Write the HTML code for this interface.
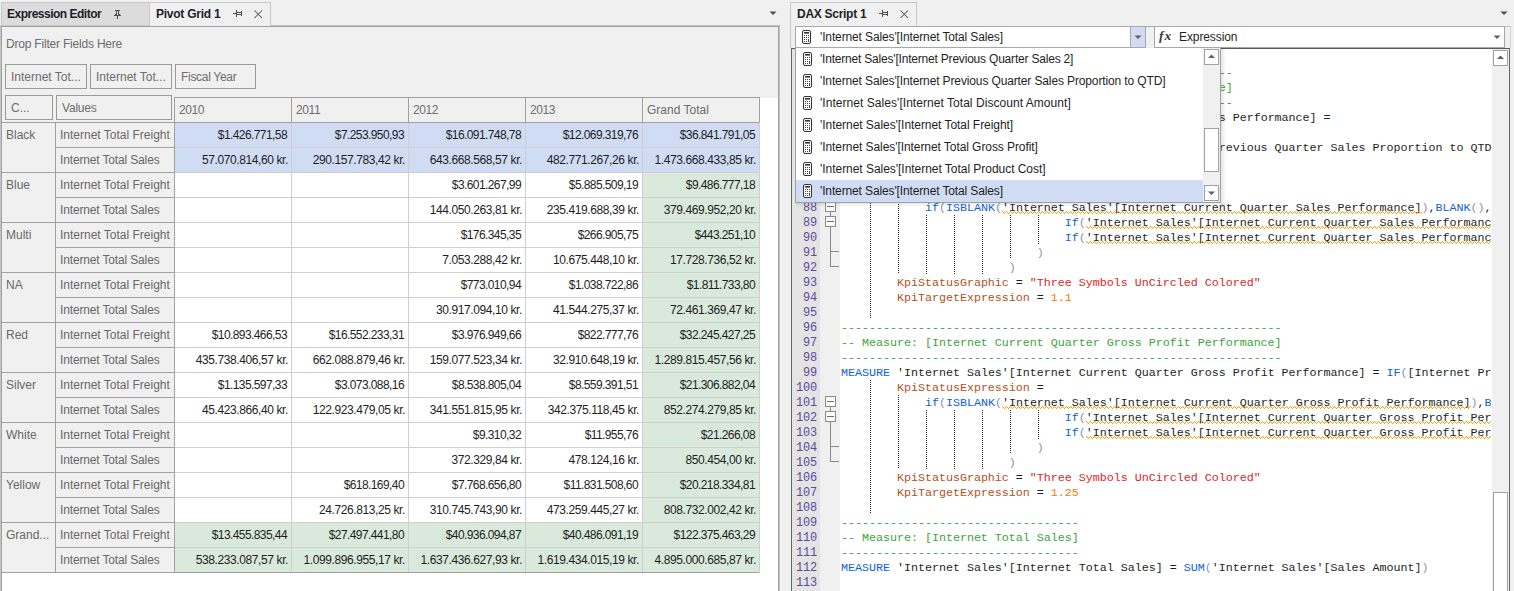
<!DOCTYPE html><html><head><meta charset="utf-8"><style>
*{margin:0;padding:0;box-sizing:border-box}
html,body{width:1514px;height:591px;overflow:hidden;background:#f0f0f0;position:relative;font-family:"Liberation Sans",sans-serif;}
div{white-space:pre}
.ui{font-size:12px;line-height:14px;color:#6d6d6d}
.tab{font-size:12px;font-weight:bold;line-height:14px;color:#1e1e2a}
.num{font-size:12px;line-height:14px;color:#1e1e1e;letter-spacing:-0.55px;text-align:right}
.rh{font-size:12px;line-height:14px;color:#686868}
.code{font-family:"Liberation Mono",monospace;font-size:11.7px;letter-spacing:-0.02px;line-height:15px;color:#1e1e1e}
.ln{font-family:"Liberation Mono",monospace;font-size:11.9px;letter-spacing:-0.14px;line-height:15px;color:#5c4a9c;text-align:right}
.kw{color:#0f62d8}.cm{color:#3ca33c}.pr{color:#b0521a}.st{color:#e02525}.nu{color:#f07c00}.pa{color:#8a90b0}
.sqx{text-decoration:underline wavy #f5a623;text-decoration-thickness:1px;text-underline-offset:2px}
</style></head><body>
<div style="position:absolute;left:1px;top:2px;width:148px;height:24px;background:#dcdcdc;border-top:1px solid #c8c8c8;border-left:1px solid #c8c8c8"></div>
<div style="position:absolute;left:149px;top:2px;width:1px;height:24px;background:#c8c8c8"></div>
<div class="tab" style="position:absolute;left:7px;top:7px;letter-spacing:-0.5px">Expression Editor</div>
<svg style="position:absolute;left:112px;top:8px" width="12" height="13" shape-rendering="crispEdges"><g fill="#505050"><rect x="3" y="2" width="5" height="1"/><rect x="4" y="3" width="1" height="4"/><rect x="6" y="3" width="1" height="4"/><rect x="3" y="6" width="1" height="1"/><rect x="7" y="6" width="1" height="1"/><rect x="2" y="7" width="7" height="1"/><rect x="5" y="8" width="1" height="3"/></g></svg>
<div style="position:absolute;left:150px;top:2px;width:121px;height:24px;background:#f0f0f0;border-top:1px solid #c8c8c8;border-right:1px solid #c8c8c8"></div>
<div class="tab" style="position:absolute;left:156px;top:7px;letter-spacing:-0.25px">Pivot Grid 1</div>
<svg style="position:absolute;left:232px;top:9px" width="12" height="10" shape-rendering="crispEdges"><g fill="#505050"><rect x="1" y="4" width="3" height="1"/><rect x="4" y="1" width="1" height="7"/><rect x="5" y="3" width="4" height="1"/><rect x="5" y="5" width="4" height="1"/><rect x="9" y="2" width="1" height="5"/></g></svg>
<svg style="position:absolute;left:254px;top:10px" width="9" height="9" viewBox="0 0 9 9"><path d="M0.5 0.5L8 8M8 0.5L0.5 8" stroke="#555" stroke-width="1.05"/></svg>
<svg style="position:absolute;left:769px;top:11px" width="8" height="5" viewBox="0 0 8 5"><path d="M0.5 0.5h7L4 4z" fill="#505050"/></svg>
<div style="position:absolute;left:1px;top:26px;width:778px;height:565px;background:#f0f0f0;border-top:1px solid #a0a0a0;border-left:1px solid #a0a0a0;border-right:1px solid #a0a0a0"></div>
<div style="position:absolute;left:271px;top:25px;width:509px;height:1px;background:#c4c4c4"></div>
<div style="position:absolute;left:779px;top:25px;width:1px;height:566px;background:#c4c4c4"></div>
<div style="position:absolute;left:0px;top:25px;width:1px;height:566px;background:#c4c4c4"></div>
<div style="position:absolute;left:1px;top:25px;width:148px;height:1px;background:#c8c8c8"></div>
<div style="position:absolute;left:2px;top:98px;width:776px;height:493px;background:#fff"></div>
<div style="position:absolute;left:2px;top:98px;width:173px;height:25px;background:#f0f0f0"></div>
<div class="ui" style="position:absolute;left:6px;top:37px;letter-spacing:-0.2px">Drop Filter Fields Here</div>
<div style="position:absolute;left:5px;top:64px;width:82px;height:25px;border:1px solid #9a9a9a"></div>
<div class="ui" style="position:absolute;left:11px;top:70px;">Internet Tot...</div>
<div style="position:absolute;left:90px;top:64px;width:82px;height:25px;border:1px solid #9a9a9a"></div>
<div class="ui" style="position:absolute;left:96px;top:70px;">Internet Tot...</div>
<div style="position:absolute;left:175px;top:64px;width:81px;height:25px;border:1px solid #9a9a9a"></div>
<div class="ui" style="position:absolute;left:181px;top:70px;letter-spacing:-0.3px">Fiscal Year</div>
<div style="position:absolute;left:5px;top:95px;width:48px;height:25px;border:1px solid #9a9a9a"></div>
<div class="ui" style="position:absolute;left:11px;top:101px;">C...</div>
<div style="position:absolute;left:56px;top:95px;width:116px;height:25px;border:1px solid #9a9a9a"></div>
<div class="ui" style="position:absolute;left:62px;top:101px;letter-spacing:-0.2px">Values</div>
<div style="position:absolute;left:174px;top:97px;width:586px;height:26px;background:#f0f0f0;border-top:1px solid #a0a0a0;border-left:1px solid #a0a0a0;border-right:1px solid #a0a0a0"></div>
<div class="ui" style="position:absolute;left:179px;top:103px;letter-spacing:-0.4px">2010</div>
<div style="position:absolute;left:291px;top:97px;width:1px;height:25px;background:#a0a0a0"></div>
<div class="ui" style="position:absolute;left:296px;top:103px;letter-spacing:-0.4px">2011</div>
<div style="position:absolute;left:408px;top:97px;width:1px;height:25px;background:#a0a0a0"></div>
<div class="ui" style="position:absolute;left:413px;top:103px;letter-spacing:-0.4px">2012</div>
<div style="position:absolute;left:525px;top:97px;width:1px;height:25px;background:#a0a0a0"></div>
<div class="ui" style="position:absolute;left:530px;top:103px;letter-spacing:-0.4px">2013</div>
<div style="position:absolute;left:642px;top:97px;width:1px;height:25px;background:#a0a0a0"></div>
<div class="ui" style="position:absolute;left:647px;top:103px;">Grand Total</div>
<div style="position:absolute;left:1px;top:122px;width:759px;height:1px;background:#a0a0a0"></div>
<div style="position:absolute;left:2px;top:123px;width:53px;height:50px;background:#f0f0f0;border-bottom:1px solid #a0a0a0"></div>
<div class="rh" style="position:absolute;left:6px;top:128px;">Black</div>
<div style="position:absolute;left:55px;top:123px;width:120px;height:25px;background:#f0f0f0;border-bottom:1px solid #a0a0a0;border-left:1px solid #a0a0a0;border-right:1px solid #a0a0a0"></div>
<div class="rh" style="position:absolute;left:60px;top:128px;">Internet Total Freight</div>
<div style="position:absolute;left:175px;top:123px;width:117px;height:25px;background:#cfdcf4;border-bottom:1px solid #cfcfcf;border-right:1px solid #cfcfcf"></div>
<div class="num" style="position:absolute;left:175px;top:128px;width:112px;letter-spacing:-0.58px">$1.426.771,58</div>
<div style="position:absolute;left:292px;top:123px;width:117px;height:25px;background:#cfdcf4;border-bottom:1px solid #cfcfcf;border-right:1px solid #cfcfcf"></div>
<div class="num" style="position:absolute;left:292px;top:128px;width:112px;letter-spacing:-0.58px">$7.253.950,93</div>
<div style="position:absolute;left:409px;top:123px;width:117px;height:25px;background:#cfdcf4;border-bottom:1px solid #cfcfcf;border-right:1px solid #cfcfcf"></div>
<div class="num" style="position:absolute;left:409px;top:128px;width:112px;letter-spacing:-0.58px">$16.091.748,78</div>
<div style="position:absolute;left:526px;top:123px;width:117px;height:25px;background:#cfdcf4;border-bottom:1px solid #cfcfcf;border-right:1px solid #cfcfcf"></div>
<div class="num" style="position:absolute;left:526px;top:128px;width:112px;letter-spacing:-0.58px">$12.069.319,76</div>
<div style="position:absolute;left:643px;top:123px;width:117px;height:25px;background:#cfdcf4;border-bottom:1px solid #cfcfcf;border-right:1px solid #cfcfcf"></div>
<div class="num" style="position:absolute;left:643px;top:128px;width:112px;letter-spacing:-0.58px">$36.841.791,05</div>
<div style="position:absolute;left:55px;top:148px;width:120px;height:25px;background:#f0f0f0;border-bottom:1px solid #a0a0a0;border-left:1px solid #a0a0a0;border-right:1px solid #a0a0a0"></div>
<div class="rh" style="position:absolute;left:60px;top:153px;letter-spacing:-0.15px">Internet Total Sales</div>
<div style="position:absolute;left:175px;top:148px;width:117px;height:25px;background:#cfdcf4;border-bottom:1px solid #cfcfcf;border-right:1px solid #cfcfcf"></div>
<div class="num" style="position:absolute;left:175px;top:153px;width:113px;letter-spacing:-0.4px">57.070.814,60 kr.</div>
<div style="position:absolute;left:292px;top:148px;width:117px;height:25px;background:#cfdcf4;border-bottom:1px solid #cfcfcf;border-right:1px solid #cfcfcf"></div>
<div class="num" style="position:absolute;left:292px;top:153px;width:113px;letter-spacing:-0.4px">290.157.783,42 kr.</div>
<div style="position:absolute;left:409px;top:148px;width:117px;height:25px;background:#cfdcf4;border-bottom:1px solid #cfcfcf;border-right:1px solid #cfcfcf"></div>
<div class="num" style="position:absolute;left:409px;top:153px;width:113px;letter-spacing:-0.4px">643.668.568,57 kr.</div>
<div style="position:absolute;left:526px;top:148px;width:117px;height:25px;background:#cfdcf4;border-bottom:1px solid #cfcfcf;border-right:1px solid #cfcfcf"></div>
<div class="num" style="position:absolute;left:526px;top:153px;width:113px;letter-spacing:-0.4px">482.771.267,26 kr.</div>
<div style="position:absolute;left:643px;top:148px;width:117px;height:25px;background:#cfdcf4;border-bottom:1px solid #cfcfcf;border-right:1px solid #cfcfcf"></div>
<div class="num" style="position:absolute;left:643px;top:153px;width:113px;letter-spacing:-0.4px">1.473.668.433,85 kr.</div>
<div style="position:absolute;left:2px;top:173px;width:53px;height:50px;background:#f0f0f0;border-bottom:1px solid #a0a0a0"></div>
<div class="rh" style="position:absolute;left:6px;top:178px;">Blue</div>
<div style="position:absolute;left:55px;top:173px;width:120px;height:25px;background:#f0f0f0;border-bottom:1px solid #a0a0a0;border-left:1px solid #a0a0a0;border-right:1px solid #a0a0a0"></div>
<div class="rh" style="position:absolute;left:60px;top:178px;">Internet Total Freight</div>
<div style="position:absolute;left:175px;top:173px;width:117px;height:25px;background:#fff;border-bottom:1px solid #cfcfcf;border-right:1px solid #cfcfcf"></div>
<div style="position:absolute;left:292px;top:173px;width:117px;height:25px;background:#fff;border-bottom:1px solid #cfcfcf;border-right:1px solid #cfcfcf"></div>
<div style="position:absolute;left:409px;top:173px;width:117px;height:25px;background:#fff;border-bottom:1px solid #cfcfcf;border-right:1px solid #cfcfcf"></div>
<div class="num" style="position:absolute;left:409px;top:178px;width:112px;letter-spacing:-0.58px">$3.601.267,99</div>
<div style="position:absolute;left:526px;top:173px;width:117px;height:25px;background:#fff;border-bottom:1px solid #cfcfcf;border-right:1px solid #cfcfcf"></div>
<div class="num" style="position:absolute;left:526px;top:178px;width:112px;letter-spacing:-0.58px">$5.885.509,19</div>
<div style="position:absolute;left:643px;top:173px;width:117px;height:25px;background:#d9e9dc;border-bottom:1px solid #cfcfcf;border-right:1px solid #cfcfcf"></div>
<div class="num" style="position:absolute;left:643px;top:178px;width:112px;letter-spacing:-0.58px">$9.486.777,18</div>
<div style="position:absolute;left:55px;top:198px;width:120px;height:25px;background:#f0f0f0;border-bottom:1px solid #a0a0a0;border-left:1px solid #a0a0a0;border-right:1px solid #a0a0a0"></div>
<div class="rh" style="position:absolute;left:60px;top:203px;letter-spacing:-0.15px">Internet Total Sales</div>
<div style="position:absolute;left:175px;top:198px;width:117px;height:25px;background:#fff;border-bottom:1px solid #cfcfcf;border-right:1px solid #cfcfcf"></div>
<div style="position:absolute;left:292px;top:198px;width:117px;height:25px;background:#fff;border-bottom:1px solid #cfcfcf;border-right:1px solid #cfcfcf"></div>
<div style="position:absolute;left:409px;top:198px;width:117px;height:25px;background:#fff;border-bottom:1px solid #cfcfcf;border-right:1px solid #cfcfcf"></div>
<div class="num" style="position:absolute;left:409px;top:203px;width:113px;letter-spacing:-0.4px">144.050.263,81 kr.</div>
<div style="position:absolute;left:526px;top:198px;width:117px;height:25px;background:#fff;border-bottom:1px solid #cfcfcf;border-right:1px solid #cfcfcf"></div>
<div class="num" style="position:absolute;left:526px;top:203px;width:113px;letter-spacing:-0.4px">235.419.688,39 kr.</div>
<div style="position:absolute;left:643px;top:198px;width:117px;height:25px;background:#d9e9dc;border-bottom:1px solid #cfcfcf;border-right:1px solid #cfcfcf"></div>
<div class="num" style="position:absolute;left:643px;top:203px;width:113px;letter-spacing:-0.4px">379.469.952,20 kr.</div>
<div style="position:absolute;left:2px;top:223px;width:53px;height:50px;background:#f0f0f0;border-bottom:1px solid #a0a0a0"></div>
<div class="rh" style="position:absolute;left:6px;top:228px;">Multi</div>
<div style="position:absolute;left:55px;top:223px;width:120px;height:25px;background:#f0f0f0;border-bottom:1px solid #a0a0a0;border-left:1px solid #a0a0a0;border-right:1px solid #a0a0a0"></div>
<div class="rh" style="position:absolute;left:60px;top:228px;">Internet Total Freight</div>
<div style="position:absolute;left:175px;top:223px;width:117px;height:25px;background:#fff;border-bottom:1px solid #cfcfcf;border-right:1px solid #cfcfcf"></div>
<div style="position:absolute;left:292px;top:223px;width:117px;height:25px;background:#fff;border-bottom:1px solid #cfcfcf;border-right:1px solid #cfcfcf"></div>
<div style="position:absolute;left:409px;top:223px;width:117px;height:25px;background:#fff;border-bottom:1px solid #cfcfcf;border-right:1px solid #cfcfcf"></div>
<div class="num" style="position:absolute;left:409px;top:228px;width:112px;letter-spacing:-0.58px">$176.345,35</div>
<div style="position:absolute;left:526px;top:223px;width:117px;height:25px;background:#fff;border-bottom:1px solid #cfcfcf;border-right:1px solid #cfcfcf"></div>
<div class="num" style="position:absolute;left:526px;top:228px;width:112px;letter-spacing:-0.58px">$266.905,75</div>
<div style="position:absolute;left:643px;top:223px;width:117px;height:25px;background:#d9e9dc;border-bottom:1px solid #cfcfcf;border-right:1px solid #cfcfcf"></div>
<div class="num" style="position:absolute;left:643px;top:228px;width:112px;letter-spacing:-0.58px">$443.251,10</div>
<div style="position:absolute;left:55px;top:248px;width:120px;height:25px;background:#f0f0f0;border-bottom:1px solid #a0a0a0;border-left:1px solid #a0a0a0;border-right:1px solid #a0a0a0"></div>
<div class="rh" style="position:absolute;left:60px;top:253px;letter-spacing:-0.15px">Internet Total Sales</div>
<div style="position:absolute;left:175px;top:248px;width:117px;height:25px;background:#fff;border-bottom:1px solid #cfcfcf;border-right:1px solid #cfcfcf"></div>
<div style="position:absolute;left:292px;top:248px;width:117px;height:25px;background:#fff;border-bottom:1px solid #cfcfcf;border-right:1px solid #cfcfcf"></div>
<div style="position:absolute;left:409px;top:248px;width:117px;height:25px;background:#fff;border-bottom:1px solid #cfcfcf;border-right:1px solid #cfcfcf"></div>
<div class="num" style="position:absolute;left:409px;top:253px;width:113px;letter-spacing:-0.4px">7.053.288,42 kr.</div>
<div style="position:absolute;left:526px;top:248px;width:117px;height:25px;background:#fff;border-bottom:1px solid #cfcfcf;border-right:1px solid #cfcfcf"></div>
<div class="num" style="position:absolute;left:526px;top:253px;width:113px;letter-spacing:-0.4px">10.675.448,10 kr.</div>
<div style="position:absolute;left:643px;top:248px;width:117px;height:25px;background:#d9e9dc;border-bottom:1px solid #cfcfcf;border-right:1px solid #cfcfcf"></div>
<div class="num" style="position:absolute;left:643px;top:253px;width:113px;letter-spacing:-0.4px">17.728.736,52 kr.</div>
<div style="position:absolute;left:2px;top:273px;width:53px;height:50px;background:#f0f0f0;border-bottom:1px solid #a0a0a0"></div>
<div class="rh" style="position:absolute;left:6px;top:278px;">NA</div>
<div style="position:absolute;left:55px;top:273px;width:120px;height:25px;background:#f0f0f0;border-bottom:1px solid #a0a0a0;border-left:1px solid #a0a0a0;border-right:1px solid #a0a0a0"></div>
<div class="rh" style="position:absolute;left:60px;top:278px;">Internet Total Freight</div>
<div style="position:absolute;left:175px;top:273px;width:117px;height:25px;background:#fff;border-bottom:1px solid #cfcfcf;border-right:1px solid #cfcfcf"></div>
<div style="position:absolute;left:292px;top:273px;width:117px;height:25px;background:#fff;border-bottom:1px solid #cfcfcf;border-right:1px solid #cfcfcf"></div>
<div style="position:absolute;left:409px;top:273px;width:117px;height:25px;background:#fff;border-bottom:1px solid #cfcfcf;border-right:1px solid #cfcfcf"></div>
<div class="num" style="position:absolute;left:409px;top:278px;width:112px;letter-spacing:-0.58px">$773.010,94</div>
<div style="position:absolute;left:526px;top:273px;width:117px;height:25px;background:#fff;border-bottom:1px solid #cfcfcf;border-right:1px solid #cfcfcf"></div>
<div class="num" style="position:absolute;left:526px;top:278px;width:112px;letter-spacing:-0.58px">$1.038.722,86</div>
<div style="position:absolute;left:643px;top:273px;width:117px;height:25px;background:#d9e9dc;border-bottom:1px solid #cfcfcf;border-right:1px solid #cfcfcf"></div>
<div class="num" style="position:absolute;left:643px;top:278px;width:112px;letter-spacing:-0.58px">$1.811.733,80</div>
<div style="position:absolute;left:55px;top:298px;width:120px;height:25px;background:#f0f0f0;border-bottom:1px solid #a0a0a0;border-left:1px solid #a0a0a0;border-right:1px solid #a0a0a0"></div>
<div class="rh" style="position:absolute;left:60px;top:303px;letter-spacing:-0.15px">Internet Total Sales</div>
<div style="position:absolute;left:175px;top:298px;width:117px;height:25px;background:#fff;border-bottom:1px solid #cfcfcf;border-right:1px solid #cfcfcf"></div>
<div style="position:absolute;left:292px;top:298px;width:117px;height:25px;background:#fff;border-bottom:1px solid #cfcfcf;border-right:1px solid #cfcfcf"></div>
<div style="position:absolute;left:409px;top:298px;width:117px;height:25px;background:#fff;border-bottom:1px solid #cfcfcf;border-right:1px solid #cfcfcf"></div>
<div class="num" style="position:absolute;left:409px;top:303px;width:113px;letter-spacing:-0.4px">30.917.094,10 kr.</div>
<div style="position:absolute;left:526px;top:298px;width:117px;height:25px;background:#fff;border-bottom:1px solid #cfcfcf;border-right:1px solid #cfcfcf"></div>
<div class="num" style="position:absolute;left:526px;top:303px;width:113px;letter-spacing:-0.4px">41.544.275,37 kr.</div>
<div style="position:absolute;left:643px;top:298px;width:117px;height:25px;background:#d9e9dc;border-bottom:1px solid #cfcfcf;border-right:1px solid #cfcfcf"></div>
<div class="num" style="position:absolute;left:643px;top:303px;width:113px;letter-spacing:-0.4px">72.461.369,47 kr.</div>
<div style="position:absolute;left:2px;top:323px;width:53px;height:50px;background:#f0f0f0;border-bottom:1px solid #a0a0a0"></div>
<div class="rh" style="position:absolute;left:6px;top:328px;">Red</div>
<div style="position:absolute;left:55px;top:323px;width:120px;height:25px;background:#f0f0f0;border-bottom:1px solid #a0a0a0;border-left:1px solid #a0a0a0;border-right:1px solid #a0a0a0"></div>
<div class="rh" style="position:absolute;left:60px;top:328px;">Internet Total Freight</div>
<div style="position:absolute;left:175px;top:323px;width:117px;height:25px;background:#fff;border-bottom:1px solid #cfcfcf;border-right:1px solid #cfcfcf"></div>
<div class="num" style="position:absolute;left:175px;top:328px;width:112px;letter-spacing:-0.58px">$10.893.466,53</div>
<div style="position:absolute;left:292px;top:323px;width:117px;height:25px;background:#fff;border-bottom:1px solid #cfcfcf;border-right:1px solid #cfcfcf"></div>
<div class="num" style="position:absolute;left:292px;top:328px;width:112px;letter-spacing:-0.58px">$16.552.233,31</div>
<div style="position:absolute;left:409px;top:323px;width:117px;height:25px;background:#fff;border-bottom:1px solid #cfcfcf;border-right:1px solid #cfcfcf"></div>
<div class="num" style="position:absolute;left:409px;top:328px;width:112px;letter-spacing:-0.58px">$3.976.949,66</div>
<div style="position:absolute;left:526px;top:323px;width:117px;height:25px;background:#fff;border-bottom:1px solid #cfcfcf;border-right:1px solid #cfcfcf"></div>
<div class="num" style="position:absolute;left:526px;top:328px;width:112px;letter-spacing:-0.58px">$822.777,76</div>
<div style="position:absolute;left:643px;top:323px;width:117px;height:25px;background:#d9e9dc;border-bottom:1px solid #cfcfcf;border-right:1px solid #cfcfcf"></div>
<div class="num" style="position:absolute;left:643px;top:328px;width:112px;letter-spacing:-0.58px">$32.245.427,25</div>
<div style="position:absolute;left:55px;top:348px;width:120px;height:25px;background:#f0f0f0;border-bottom:1px solid #a0a0a0;border-left:1px solid #a0a0a0;border-right:1px solid #a0a0a0"></div>
<div class="rh" style="position:absolute;left:60px;top:353px;letter-spacing:-0.15px">Internet Total Sales</div>
<div style="position:absolute;left:175px;top:348px;width:117px;height:25px;background:#fff;border-bottom:1px solid #cfcfcf;border-right:1px solid #cfcfcf"></div>
<div class="num" style="position:absolute;left:175px;top:353px;width:113px;letter-spacing:-0.4px">435.738.406,57 kr.</div>
<div style="position:absolute;left:292px;top:348px;width:117px;height:25px;background:#fff;border-bottom:1px solid #cfcfcf;border-right:1px solid #cfcfcf"></div>
<div class="num" style="position:absolute;left:292px;top:353px;width:113px;letter-spacing:-0.4px">662.088.879,46 kr.</div>
<div style="position:absolute;left:409px;top:348px;width:117px;height:25px;background:#fff;border-bottom:1px solid #cfcfcf;border-right:1px solid #cfcfcf"></div>
<div class="num" style="position:absolute;left:409px;top:353px;width:113px;letter-spacing:-0.4px">159.077.523,34 kr.</div>
<div style="position:absolute;left:526px;top:348px;width:117px;height:25px;background:#fff;border-bottom:1px solid #cfcfcf;border-right:1px solid #cfcfcf"></div>
<div class="num" style="position:absolute;left:526px;top:353px;width:113px;letter-spacing:-0.4px">32.910.648,19 kr.</div>
<div style="position:absolute;left:643px;top:348px;width:117px;height:25px;background:#d9e9dc;border-bottom:1px solid #cfcfcf;border-right:1px solid #cfcfcf"></div>
<div class="num" style="position:absolute;left:643px;top:353px;width:113px;letter-spacing:-0.4px">1.289.815.457,56 kr.</div>
<div style="position:absolute;left:2px;top:373px;width:53px;height:50px;background:#f0f0f0;border-bottom:1px solid #a0a0a0"></div>
<div class="rh" style="position:absolute;left:6px;top:378px;">Silver</div>
<div style="position:absolute;left:55px;top:373px;width:120px;height:25px;background:#f0f0f0;border-bottom:1px solid #a0a0a0;border-left:1px solid #a0a0a0;border-right:1px solid #a0a0a0"></div>
<div class="rh" style="position:absolute;left:60px;top:378px;">Internet Total Freight</div>
<div style="position:absolute;left:175px;top:373px;width:117px;height:25px;background:#fff;border-bottom:1px solid #cfcfcf;border-right:1px solid #cfcfcf"></div>
<div class="num" style="position:absolute;left:175px;top:378px;width:112px;letter-spacing:-0.58px">$1.135.597,33</div>
<div style="position:absolute;left:292px;top:373px;width:117px;height:25px;background:#fff;border-bottom:1px solid #cfcfcf;border-right:1px solid #cfcfcf"></div>
<div class="num" style="position:absolute;left:292px;top:378px;width:112px;letter-spacing:-0.58px">$3.073.088,16</div>
<div style="position:absolute;left:409px;top:373px;width:117px;height:25px;background:#fff;border-bottom:1px solid #cfcfcf;border-right:1px solid #cfcfcf"></div>
<div class="num" style="position:absolute;left:409px;top:378px;width:112px;letter-spacing:-0.58px">$8.538.805,04</div>
<div style="position:absolute;left:526px;top:373px;width:117px;height:25px;background:#fff;border-bottom:1px solid #cfcfcf;border-right:1px solid #cfcfcf"></div>
<div class="num" style="position:absolute;left:526px;top:378px;width:112px;letter-spacing:-0.58px">$8.559.391,51</div>
<div style="position:absolute;left:643px;top:373px;width:117px;height:25px;background:#d9e9dc;border-bottom:1px solid #cfcfcf;border-right:1px solid #cfcfcf"></div>
<div class="num" style="position:absolute;left:643px;top:378px;width:112px;letter-spacing:-0.58px">$21.306.882,04</div>
<div style="position:absolute;left:55px;top:398px;width:120px;height:25px;background:#f0f0f0;border-bottom:1px solid #a0a0a0;border-left:1px solid #a0a0a0;border-right:1px solid #a0a0a0"></div>
<div class="rh" style="position:absolute;left:60px;top:403px;letter-spacing:-0.15px">Internet Total Sales</div>
<div style="position:absolute;left:175px;top:398px;width:117px;height:25px;background:#fff;border-bottom:1px solid #cfcfcf;border-right:1px solid #cfcfcf"></div>
<div class="num" style="position:absolute;left:175px;top:403px;width:113px;letter-spacing:-0.4px">45.423.866,40 kr.</div>
<div style="position:absolute;left:292px;top:398px;width:117px;height:25px;background:#fff;border-bottom:1px solid #cfcfcf;border-right:1px solid #cfcfcf"></div>
<div class="num" style="position:absolute;left:292px;top:403px;width:113px;letter-spacing:-0.4px">122.923.479,05 kr.</div>
<div style="position:absolute;left:409px;top:398px;width:117px;height:25px;background:#fff;border-bottom:1px solid #cfcfcf;border-right:1px solid #cfcfcf"></div>
<div class="num" style="position:absolute;left:409px;top:403px;width:113px;letter-spacing:-0.4px">341.551.815,95 kr.</div>
<div style="position:absolute;left:526px;top:398px;width:117px;height:25px;background:#fff;border-bottom:1px solid #cfcfcf;border-right:1px solid #cfcfcf"></div>
<div class="num" style="position:absolute;left:526px;top:403px;width:113px;letter-spacing:-0.4px">342.375.118,45 kr.</div>
<div style="position:absolute;left:643px;top:398px;width:117px;height:25px;background:#d9e9dc;border-bottom:1px solid #cfcfcf;border-right:1px solid #cfcfcf"></div>
<div class="num" style="position:absolute;left:643px;top:403px;width:113px;letter-spacing:-0.4px">852.274.279,85 kr.</div>
<div style="position:absolute;left:2px;top:423px;width:53px;height:50px;background:#f0f0f0;border-bottom:1px solid #a0a0a0"></div>
<div class="rh" style="position:absolute;left:6px;top:428px;">White</div>
<div style="position:absolute;left:55px;top:423px;width:120px;height:25px;background:#f0f0f0;border-bottom:1px solid #a0a0a0;border-left:1px solid #a0a0a0;border-right:1px solid #a0a0a0"></div>
<div class="rh" style="position:absolute;left:60px;top:428px;">Internet Total Freight</div>
<div style="position:absolute;left:175px;top:423px;width:117px;height:25px;background:#fff;border-bottom:1px solid #cfcfcf;border-right:1px solid #cfcfcf"></div>
<div style="position:absolute;left:292px;top:423px;width:117px;height:25px;background:#fff;border-bottom:1px solid #cfcfcf;border-right:1px solid #cfcfcf"></div>
<div style="position:absolute;left:409px;top:423px;width:117px;height:25px;background:#fff;border-bottom:1px solid #cfcfcf;border-right:1px solid #cfcfcf"></div>
<div class="num" style="position:absolute;left:409px;top:428px;width:112px;letter-spacing:-0.58px">$9.310,32</div>
<div style="position:absolute;left:526px;top:423px;width:117px;height:25px;background:#fff;border-bottom:1px solid #cfcfcf;border-right:1px solid #cfcfcf"></div>
<div class="num" style="position:absolute;left:526px;top:428px;width:112px;letter-spacing:-0.58px">$11.955,76</div>
<div style="position:absolute;left:643px;top:423px;width:117px;height:25px;background:#d9e9dc;border-bottom:1px solid #cfcfcf;border-right:1px solid #cfcfcf"></div>
<div class="num" style="position:absolute;left:643px;top:428px;width:112px;letter-spacing:-0.58px">$21.266,08</div>
<div style="position:absolute;left:55px;top:448px;width:120px;height:25px;background:#f0f0f0;border-bottom:1px solid #a0a0a0;border-left:1px solid #a0a0a0;border-right:1px solid #a0a0a0"></div>
<div class="rh" style="position:absolute;left:60px;top:453px;letter-spacing:-0.15px">Internet Total Sales</div>
<div style="position:absolute;left:175px;top:448px;width:117px;height:25px;background:#fff;border-bottom:1px solid #cfcfcf;border-right:1px solid #cfcfcf"></div>
<div style="position:absolute;left:292px;top:448px;width:117px;height:25px;background:#fff;border-bottom:1px solid #cfcfcf;border-right:1px solid #cfcfcf"></div>
<div style="position:absolute;left:409px;top:448px;width:117px;height:25px;background:#fff;border-bottom:1px solid #cfcfcf;border-right:1px solid #cfcfcf"></div>
<div class="num" style="position:absolute;left:409px;top:453px;width:113px;letter-spacing:-0.4px">372.329,84 kr.</div>
<div style="position:absolute;left:526px;top:448px;width:117px;height:25px;background:#fff;border-bottom:1px solid #cfcfcf;border-right:1px solid #cfcfcf"></div>
<div class="num" style="position:absolute;left:526px;top:453px;width:113px;letter-spacing:-0.4px">478.124,16 kr.</div>
<div style="position:absolute;left:643px;top:448px;width:117px;height:25px;background:#d9e9dc;border-bottom:1px solid #cfcfcf;border-right:1px solid #cfcfcf"></div>
<div class="num" style="position:absolute;left:643px;top:453px;width:113px;letter-spacing:-0.4px">850.454,00 kr.</div>
<div style="position:absolute;left:2px;top:473px;width:53px;height:50px;background:#f0f0f0;border-bottom:1px solid #a0a0a0"></div>
<div class="rh" style="position:absolute;left:6px;top:478px;">Yellow</div>
<div style="position:absolute;left:55px;top:473px;width:120px;height:25px;background:#f0f0f0;border-bottom:1px solid #a0a0a0;border-left:1px solid #a0a0a0;border-right:1px solid #a0a0a0"></div>
<div class="rh" style="position:absolute;left:60px;top:478px;">Internet Total Freight</div>
<div style="position:absolute;left:175px;top:473px;width:117px;height:25px;background:#fff;border-bottom:1px solid #cfcfcf;border-right:1px solid #cfcfcf"></div>
<div style="position:absolute;left:292px;top:473px;width:117px;height:25px;background:#fff;border-bottom:1px solid #cfcfcf;border-right:1px solid #cfcfcf"></div>
<div class="num" style="position:absolute;left:292px;top:478px;width:112px;letter-spacing:-0.58px">$618.169,40</div>
<div style="position:absolute;left:409px;top:473px;width:117px;height:25px;background:#fff;border-bottom:1px solid #cfcfcf;border-right:1px solid #cfcfcf"></div>
<div class="num" style="position:absolute;left:409px;top:478px;width:112px;letter-spacing:-0.58px">$7.768.656,80</div>
<div style="position:absolute;left:526px;top:473px;width:117px;height:25px;background:#fff;border-bottom:1px solid #cfcfcf;border-right:1px solid #cfcfcf"></div>
<div class="num" style="position:absolute;left:526px;top:478px;width:112px;letter-spacing:-0.58px">$11.831.508,60</div>
<div style="position:absolute;left:643px;top:473px;width:117px;height:25px;background:#d9e9dc;border-bottom:1px solid #cfcfcf;border-right:1px solid #cfcfcf"></div>
<div class="num" style="position:absolute;left:643px;top:478px;width:112px;letter-spacing:-0.58px">$20.218.334,81</div>
<div style="position:absolute;left:55px;top:498px;width:120px;height:25px;background:#f0f0f0;border-bottom:1px solid #a0a0a0;border-left:1px solid #a0a0a0;border-right:1px solid #a0a0a0"></div>
<div class="rh" style="position:absolute;left:60px;top:503px;letter-spacing:-0.15px">Internet Total Sales</div>
<div style="position:absolute;left:175px;top:498px;width:117px;height:25px;background:#fff;border-bottom:1px solid #cfcfcf;border-right:1px solid #cfcfcf"></div>
<div style="position:absolute;left:292px;top:498px;width:117px;height:25px;background:#fff;border-bottom:1px solid #cfcfcf;border-right:1px solid #cfcfcf"></div>
<div class="num" style="position:absolute;left:292px;top:503px;width:113px;letter-spacing:-0.4px">24.726.813,25 kr.</div>
<div style="position:absolute;left:409px;top:498px;width:117px;height:25px;background:#fff;border-bottom:1px solid #cfcfcf;border-right:1px solid #cfcfcf"></div>
<div class="num" style="position:absolute;left:409px;top:503px;width:113px;letter-spacing:-0.4px">310.745.743,90 kr.</div>
<div style="position:absolute;left:526px;top:498px;width:117px;height:25px;background:#fff;border-bottom:1px solid #cfcfcf;border-right:1px solid #cfcfcf"></div>
<div class="num" style="position:absolute;left:526px;top:503px;width:113px;letter-spacing:-0.4px">473.259.445,27 kr.</div>
<div style="position:absolute;left:643px;top:498px;width:117px;height:25px;background:#d9e9dc;border-bottom:1px solid #cfcfcf;border-right:1px solid #cfcfcf"></div>
<div class="num" style="position:absolute;left:643px;top:503px;width:113px;letter-spacing:-0.4px">808.732.002,42 kr.</div>
<div style="position:absolute;left:2px;top:523px;width:53px;height:50px;background:#f0f0f0;border-bottom:1px solid #a0a0a0"></div>
<div class="rh" style="position:absolute;left:6px;top:528px;">Grand...</div>
<div style="position:absolute;left:55px;top:523px;width:120px;height:25px;background:#f0f0f0;border-bottom:1px solid #a0a0a0;border-left:1px solid #a0a0a0;border-right:1px solid #a0a0a0"></div>
<div class="rh" style="position:absolute;left:60px;top:528px;">Internet Total Freight</div>
<div style="position:absolute;left:175px;top:523px;width:117px;height:25px;background:#d9e9dc;border-bottom:1px solid #cfcfcf;border-right:1px solid #cfcfcf"></div>
<div class="num" style="position:absolute;left:175px;top:528px;width:112px;letter-spacing:-0.58px">$13.455.835,44</div>
<div style="position:absolute;left:292px;top:523px;width:117px;height:25px;background:#d9e9dc;border-bottom:1px solid #cfcfcf;border-right:1px solid #cfcfcf"></div>
<div class="num" style="position:absolute;left:292px;top:528px;width:112px;letter-spacing:-0.58px">$27.497.441,80</div>
<div style="position:absolute;left:409px;top:523px;width:117px;height:25px;background:#d9e9dc;border-bottom:1px solid #cfcfcf;border-right:1px solid #cfcfcf"></div>
<div class="num" style="position:absolute;left:409px;top:528px;width:112px;letter-spacing:-0.58px">$40.936.094,87</div>
<div style="position:absolute;left:526px;top:523px;width:117px;height:25px;background:#d9e9dc;border-bottom:1px solid #cfcfcf;border-right:1px solid #cfcfcf"></div>
<div class="num" style="position:absolute;left:526px;top:528px;width:112px;letter-spacing:-0.58px">$40.486.091,19</div>
<div style="position:absolute;left:643px;top:523px;width:117px;height:25px;background:#d9e9dc;border-bottom:1px solid #cfcfcf;border-right:1px solid #cfcfcf"></div>
<div class="num" style="position:absolute;left:643px;top:528px;width:112px;letter-spacing:-0.58px">$122.375.463,29</div>
<div style="position:absolute;left:55px;top:548px;width:120px;height:25px;background:#f0f0f0;border-bottom:1px solid #a0a0a0;border-left:1px solid #a0a0a0;border-right:1px solid #a0a0a0"></div>
<div class="rh" style="position:absolute;left:60px;top:553px;letter-spacing:-0.15px">Internet Total Sales</div>
<div style="position:absolute;left:175px;top:548px;width:117px;height:25px;background:#d9e9dc;border-bottom:1px solid #cfcfcf;border-right:1px solid #cfcfcf"></div>
<div class="num" style="position:absolute;left:175px;top:553px;width:113px;letter-spacing:-0.4px">538.233.087,57 kr.</div>
<div style="position:absolute;left:292px;top:548px;width:117px;height:25px;background:#d9e9dc;border-bottom:1px solid #cfcfcf;border-right:1px solid #cfcfcf"></div>
<div class="num" style="position:absolute;left:292px;top:553px;width:113px;letter-spacing:-0.4px">1.099.896.955,17 kr.</div>
<div style="position:absolute;left:409px;top:548px;width:117px;height:25px;background:#d9e9dc;border-bottom:1px solid #cfcfcf;border-right:1px solid #cfcfcf"></div>
<div class="num" style="position:absolute;left:409px;top:553px;width:113px;letter-spacing:-0.4px">1.637.436.627,93 kr.</div>
<div style="position:absolute;left:526px;top:548px;width:117px;height:25px;background:#d9e9dc;border-bottom:1px solid #cfcfcf;border-right:1px solid #cfcfcf"></div>
<div class="num" style="position:absolute;left:526px;top:553px;width:113px;letter-spacing:-0.4px">1.619.434.015,19 kr.</div>
<div style="position:absolute;left:643px;top:548px;width:117px;height:25px;background:#d9e9dc;border-bottom:1px solid #cfcfcf;border-right:1px solid #cfcfcf"></div>
<div class="num" style="position:absolute;left:643px;top:553px;width:113px;letter-spacing:-0.4px">4.895.000.685,87 kr.</div>
<div style="position:absolute;left:1px;top:572px;width:759px;height:1px;background:#a0a0a0"></div>
<div style="position:absolute;left:759px;top:122px;width:1px;height:451px;background:#cfcfcf"></div>
<div style="position:absolute;left:790px;top:2px;width:127px;height:24px;background:#f0f0f0;border-top:1px solid #c8c8c8;border-left:1px solid #c8c8c8;border-right:1px solid #c8c8c8"></div>
<div class="tab" style="position:absolute;left:797px;top:7px;letter-spacing:-0.28px">DAX Script 1</div>
<svg style="position:absolute;left:878px;top:9px" width="12" height="10" shape-rendering="crispEdges"><g fill="#505050"><rect x="1" y="4" width="3" height="1"/><rect x="4" y="1" width="1" height="7"/><rect x="5" y="3" width="4" height="1"/><rect x="5" y="5" width="4" height="1"/><rect x="9" y="2" width="1" height="5"/></g></svg>
<svg style="position:absolute;left:900px;top:10px" width="9" height="9" viewBox="0 0 9 9"><path d="M0.5 0.5L8 8M8 0.5L0.5 8" stroke="#555" stroke-width="1.05"/></svg>
<svg style="position:absolute;left:1500px;top:11px" width="8" height="5" viewBox="0 0 8 5"><path d="M0.5 0.5h7L4 4z" fill="#505050"/></svg>
<div style="position:absolute;left:790px;top:26px;width:1px;height:22px;background:#c8c8c8"></div>
<div style="position:absolute;left:1510px;top:26px;width:1px;height:22px;background:#d8d8d8"></div>
<div style="position:absolute;left:795px;top:26px;width:351px;height:22px;background:#fff;border:1px solid #a8a8a8"></div>
<svg style="position:absolute;left:802px;top:30px" width="9" height="14" viewBox="0 0 9 14"><rect x="0.5" y="0.5" width="8" height="13" rx="1.5" fill="#fff" stroke="#333"/><rect x="2" y="2" width="5" height="1.6" fill="#333"/><g fill="#444"><rect x="2" y="5" width="1" height="1"/><rect x="4" y="5" width="1" height="1"/><rect x="6" y="5" width="1" height="1"/><rect x="2" y="7" width="1" height="1"/><rect x="4" y="7" width="1" height="1"/><rect x="6" y="7" width="1" height="1"/><rect x="2" y="9" width="1" height="1"/><rect x="4" y="9" width="1" height="1"/><rect x="2" y="11" width="1" height="1"/><rect x="4" y="11" width="1" height="1"/><rect x="6" y="9" width="1" height="3"/></g></svg>
<div class="ui" style="position:absolute;left:820px;top:30px;letter-spacing:-0.13px;color:#1e1e1e">&#x27;Internet Sales&#x27;[Internet Total Sales]</div>
<div style="position:absolute;left:1130px;top:27px;width:16px;height:20px;background:#cfdcf4;border-left:1px solid #a8a8a8;border-right:1px solid #a8a8a8"></div>
<svg style="position:absolute;left:1134px;top:35px" width="8" height="5" viewBox="0 0 8 5"><path d="M0.5 0.5h7L4 4z" fill="#606060"/></svg>
<div style="position:absolute;left:1146px;top:26px;width:8px;height:1px;background:#a8a8a8"></div>
<div style="position:absolute;left:1505px;top:26px;width:6px;height:1px;background:#c0c0c0"></div>
<div style="position:absolute;left:1154px;top:26px;width:351px;height:22px;background:#fff;border:1px solid #a8a8a8"></div>
<div style="position:absolute;left:1159px;top:28px;font-family:'Liberation Serif',serif;font-style:italic;font-weight:bold;font-size:13.5px;line-height:16px;color:#3a3a3a;letter-spacing:1px">fx</div>
<div class="ui" style="position:absolute;left:1179px;top:30px;letter-spacing:-0.1px;color:#1e1e1e">Expression</div>
<svg style="position:absolute;left:1493px;top:35px" width="8" height="5" viewBox="0 0 8 5"><path d="M0.5 0.5h7L4 4z" fill="#606060"/></svg>
<div style="position:absolute;left:791px;top:48px;width:719px;height:543px;background:#fff;border-left:1px solid #646464;border-top:1px solid #5a5a5a;border-right:1px solid #646464"></div>
<div style="position:absolute;left:792px;top:49px;width:28px;height:542px;background:#e4e4e4"></div>
<div style="position:absolute;left:820px;top:49px;width:20px;height:542px;background:#f0f0f0"></div>
<div style="position:absolute;left:1492px;top:49px;width:17px;height:542px;background:#f0f0f0"></div>
<div style="position:absolute;left:1493px;top:50px;width:15px;height:16px;background:#fff;border:1px solid #a0a0a0"></div>
<svg style="position:absolute;left:1497px;top:55px" width="8" height="5" viewBox="0 0 8 5"><path d="M3.5 0.5L7 4h-7z" fill="#606060"/></svg>
<div style="position:absolute;left:1493px;top:492px;width:15px;height:101px;background:#fff;border:1px solid #a0a0a0"></div>
<div style="position:absolute;left:840px;top:49px;width:651px;height:542px;overflow:hidden">
<div class="code" style="position:absolute;left:1px;top:17px"><span class="cm">--------------------------------------------------------</span></div>
<div class="code" style="position:absolute;left:1px;top:32px"><span class="cm">-- Measure: [Internet Current Quarter Sales Performance]</span></div>
<div class="code" style="position:absolute;left:1px;top:47px"><span class="cm">--------------------------------------------------------</span></div>
<div class="code" style="position:absolute;left:1px;top:62px"><span class="kw">MEASURE</span> &#x27;Internet Sales&#x27;[Internet Current Quarter Sales Performance] =</div>
<div class="code" style="position:absolute;left:1px;top:92px">                                                      revious Quarter Sales Proportion to QTD]</div>
<div class="code" style="position:absolute;left:1px;top:152px">            <span class="kw">if</span><span class="pa">(</span><span class="kw">ISBLANK</span><span class="pa">(</span><span class="sq">&#x27;Internet Sales&#x27;[Internet Current Quarter Sales Performance]</span><span class="pa">)</span>,<span class="kw">BLANK</span><span class="pa">()</span>,</div>
<div class="code" style="position:absolute;left:1px;top:167px">                                <span class="kw">If</span><span class="pa">(</span><span class="sq">&#x27;Internet Sales&#x27;[Internet Current Quarter Sales Performance]</span>></div>
<div class="code" style="position:absolute;left:1px;top:182px">                                <span class="kw">If</span><span class="pa">(</span><span class="sq">&#x27;Internet Sales&#x27;[Internet Current Quarter Sales Performance]</span>></div>
<div class="code" style="position:absolute;left:1px;top:197px">                            <span class="pa">)</span></div>
<div class="code" style="position:absolute;left:1px;top:212px">                        <span class="pa">)</span></div>
<div class="code" style="position:absolute;left:1px;top:227px">        <span class="pr">KpiStatusGraphic</span> = <span class="st">&quot;Three Symbols UnCircled Colored&quot;</span></div>
<div class="code" style="position:absolute;left:1px;top:242px">        <span class="pr">KpiTargetExpression</span> = <span class="nu">1.1</span></div>
<div class="code" style="position:absolute;left:1px;top:272px"><span class="cm">---------------------------------------------------------------</span></div>
<div class="code" style="position:absolute;left:1px;top:287px"><span class="cm">-- Measure: [Internet Current Quarter Gross Profit Performance]</span></div>
<div class="code" style="position:absolute;left:1px;top:302px"><span class="cm">---------------------------------------------------------------</span></div>
<div class="code" style="position:absolute;left:1px;top:317px"><span class="kw">MEASURE</span> &#x27;Internet Sales&#x27;[Internet Current Quarter Gross Profit Performance] = <span class="kw">IF</span><span class="pa">(</span>[Internet Previous</div>
<div class="code" style="position:absolute;left:1px;top:332px">        <span class="pr">KpiStatusExpression</span> =</div>
<div class="code" style="position:absolute;left:1px;top:347px">            <span class="kw">if</span><span class="pa">(</span><span class="kw">ISBLANK</span><span class="pa">(</span><span class="sq">&#x27;Internet Sales&#x27;[Internet Current Quarter Gross Profit Performance]</span><span class="pa">)</span>,<span class="kw">BLANK</span><span class="pa">()</span>,</div>
<div class="code" style="position:absolute;left:1px;top:362px">                                <span class="kw">If</span><span class="pa">(</span><span class="sq">&#x27;Internet Sales&#x27;[Internet Current Quarter Gross Profit Performance]</span>></div>
<div class="code" style="position:absolute;left:1px;top:377px">                                <span class="kw">If</span><span class="pa">(</span><span class="sq">&#x27;Internet Sales&#x27;[Internet Current Quarter Gross Profit Performance]</span>></div>
<div class="code" style="position:absolute;left:1px;top:392px">                            <span class="pa">)</span></div>
<div class="code" style="position:absolute;left:1px;top:407px">                        <span class="pa">)</span></div>
<div class="code" style="position:absolute;left:1px;top:422px">        <span class="pr">KpiStatusGraphic</span> = <span class="st">&quot;Three Symbols UnCircled Colored&quot;</span></div>
<div class="code" style="position:absolute;left:1px;top:437px">        <span class="pr">KpiTargetExpression</span> = <span class="nu">1.25</span></div>
<div class="code" style="position:absolute;left:1px;top:467px"><span class="cm">----------------------------------</span></div>
<div class="code" style="position:absolute;left:1px;top:482px"><span class="cm">-- Measure: [Internet Total Sales]</span></div>
<div class="code" style="position:absolute;left:1px;top:497px"><span class="cm">----------------------------------</span></div>
<div class="code" style="position:absolute;left:1px;top:512px"><span class="kw">MEASURE</span> &#x27;Internet Sales&#x27;[Internet Total Sales] = <span class="kw">SUM</span><span class="pa">(</span>'Internet Sales'[Sales Amount]<span class="pa">)</span></div>
<svg style="position:absolute;left:0;top:0" width="1" height="1"><defs><pattern id="zz" x="0" y="0" width="4" height="3" patternUnits="userSpaceOnUse"><rect x="0" y="0" width="1" height="1" fill="#ffa000"/><rect x="1" y="1" width="1" height="1" fill="#ffa000"/><rect x="2" y="2" width="1" height="1" fill="#ffa000"/><rect x="3" y="1" width="1" height="1" fill="#ffa000"/></pattern></defs></svg>
<svg style="position:absolute;left:162px;top:162px" width="420" height="3"><rect width="420" height="3" fill="url(#zz)"/></svg>
<svg style="position:absolute;left:246px;top:177px" width="420" height="3"><rect width="420" height="3" fill="url(#zz)"/></svg>
<svg style="position:absolute;left:246px;top:192px" width="420" height="3"><rect width="420" height="3" fill="url(#zz)"/></svg>
<svg style="position:absolute;left:162px;top:357px" width="469" height="3"><rect width="469" height="3" fill="url(#zz)"/></svg>
<svg style="position:absolute;left:246px;top:372px" width="469" height="3"><rect width="469" height="3" fill="url(#zz)"/></svg>
<svg style="position:absolute;left:246px;top:387px" width="469" height="3"><rect width="469" height="3" fill="url(#zz)"/></svg>
</div>
<div class="ln" style="position:absolute;left:792px;width:25px;top:51px">78</div>
<div class="ln" style="position:absolute;left:792px;width:25px;top:66px">79</div>
<div class="ln" style="position:absolute;left:792px;width:25px;top:81px">80</div>
<div class="ln" style="position:absolute;left:792px;width:25px;top:96px">81</div>
<div class="ln" style="position:absolute;left:792px;width:25px;top:111px">82</div>
<div class="ln" style="position:absolute;left:792px;width:25px;top:126px">83</div>
<div class="ln" style="position:absolute;left:792px;width:25px;top:141px">84</div>
<div class="ln" style="position:absolute;left:792px;width:25px;top:156px">85</div>
<div class="ln" style="position:absolute;left:792px;width:25px;top:171px">86</div>
<div class="ln" style="position:absolute;left:792px;width:25px;top:186px">87</div>
<div class="ln" style="position:absolute;left:792px;width:25px;top:201px">88</div>
<div class="ln" style="position:absolute;left:792px;width:25px;top:216px">89</div>
<div class="ln" style="position:absolute;left:792px;width:25px;top:231px">90</div>
<div class="ln" style="position:absolute;left:792px;width:25px;top:246px">91</div>
<div class="ln" style="position:absolute;left:792px;width:25px;top:261px">92</div>
<div class="ln" style="position:absolute;left:792px;width:25px;top:276px">93</div>
<div class="ln" style="position:absolute;left:792px;width:25px;top:291px">94</div>
<div class="ln" style="position:absolute;left:792px;width:25px;top:306px">95</div>
<div class="ln" style="position:absolute;left:792px;width:25px;top:321px">96</div>
<div class="ln" style="position:absolute;left:792px;width:25px;top:336px">97</div>
<div class="ln" style="position:absolute;left:792px;width:25px;top:351px">98</div>
<div class="ln" style="position:absolute;left:792px;width:25px;top:366px">99</div>
<div class="ln" style="position:absolute;left:792px;width:25px;top:381px">100</div>
<div class="ln" style="position:absolute;left:792px;width:25px;top:396px">101</div>
<div class="ln" style="position:absolute;left:792px;width:25px;top:411px">102</div>
<div class="ln" style="position:absolute;left:792px;width:25px;top:426px">103</div>
<div class="ln" style="position:absolute;left:792px;width:25px;top:441px">104</div>
<div class="ln" style="position:absolute;left:792px;width:25px;top:456px">105</div>
<div class="ln" style="position:absolute;left:792px;width:25px;top:471px">106</div>
<div class="ln" style="position:absolute;left:792px;width:25px;top:486px">107</div>
<div class="ln" style="position:absolute;left:792px;width:25px;top:501px">108</div>
<div class="ln" style="position:absolute;left:792px;width:25px;top:516px">109</div>
<div class="ln" style="position:absolute;left:792px;width:25px;top:531px">110</div>
<div class="ln" style="position:absolute;left:792px;width:25px;top:546px">111</div>
<div class="ln" style="position:absolute;left:792px;width:25px;top:561px">112</div>
<div class="ln" style="position:absolute;left:792px;width:25px;top:576px">113</div>
<div style="position:absolute;left:870px;top:125px;width:1px;height:194px;background:repeating-linear-gradient(#2a2a2a 0 1px,transparent 1px 2px)"></div>
<div style="position:absolute;left:898px;top:140px;width:1px;height:134px;background:repeating-linear-gradient(#2a2a2a 0 1px,transparent 1px 2px)"></div>
<div style="position:absolute;left:926px;top:215px;width:1px;height:59px;background:repeating-linear-gradient(#2a2a2a 0 1px,transparent 1px 2px)"></div>
<div style="position:absolute;left:954px;top:215px;width:1px;height:59px;background:repeating-linear-gradient(#2a2a2a 0 1px,transparent 1px 2px)"></div>
<div style="position:absolute;left:982px;top:215px;width:1px;height:59px;background:repeating-linear-gradient(#2a2a2a 0 1px,transparent 1px 2px)"></div>
<div style="position:absolute;left:1010px;top:215px;width:1px;height:44px;background:repeating-linear-gradient(#2a2a2a 0 1px,transparent 1px 2px)"></div>
<div style="position:absolute;left:1038px;top:215px;width:1px;height:29px;background:repeating-linear-gradient(#2a2a2a 0 1px,transparent 1px 2px)"></div>
<div style="position:absolute;left:870px;top:380px;width:1px;height:134px;background:repeating-linear-gradient(#2a2a2a 0 1px,transparent 1px 2px)"></div>
<div style="position:absolute;left:898px;top:395px;width:1px;height:74px;background:repeating-linear-gradient(#2a2a2a 0 1px,transparent 1px 2px)"></div>
<div style="position:absolute;left:926px;top:410px;width:1px;height:59px;background:repeating-linear-gradient(#2a2a2a 0 1px,transparent 1px 2px)"></div>
<div style="position:absolute;left:954px;top:410px;width:1px;height:59px;background:repeating-linear-gradient(#2a2a2a 0 1px,transparent 1px 2px)"></div>
<div style="position:absolute;left:982px;top:410px;width:1px;height:59px;background:repeating-linear-gradient(#2a2a2a 0 1px,transparent 1px 2px)"></div>
<div style="position:absolute;left:1010px;top:410px;width:1px;height:44px;background:repeating-linear-gradient(#2a2a2a 0 1px,transparent 1px 2px)"></div>
<div style="position:absolute;left:1038px;top:410px;width:1px;height:29px;background:repeating-linear-gradient(#2a2a2a 0 1px,transparent 1px 2px)"></div>
<div style="position:absolute;left:830px;top:206px;width:1px;height:61px;background:#8a8a8a"></div>
<div style="position:absolute;left:830px;top:266px;width:9px;height:1px;background:#8a8a8a"></div>
<div style="position:absolute;left:830px;top:251px;width:9px;height:1px;background:#8a8a8a"></div>
<div style="position:absolute;left:825px;top:201px;width:11px;height:11px;background:#fff;border:1px solid #8a8a8a"></div>
<div style="position:absolute;left:827px;top:206px;width:7px;height:1px;background:#707070"></div>
<div style="position:absolute;left:825px;top:216px;width:11px;height:11px;background:#fff;border:1px solid #8a8a8a"></div>
<div style="position:absolute;left:827px;top:221px;width:7px;height:1px;background:#707070"></div>
<div style="position:absolute;left:830px;top:401px;width:1px;height:61px;background:#8a8a8a"></div>
<div style="position:absolute;left:830px;top:461px;width:9px;height:1px;background:#8a8a8a"></div>
<div style="position:absolute;left:830px;top:446px;width:9px;height:1px;background:#8a8a8a"></div>
<div style="position:absolute;left:825px;top:396px;width:11px;height:11px;background:#fff;border:1px solid #8a8a8a"></div>
<div style="position:absolute;left:827px;top:401px;width:7px;height:1px;background:#707070"></div>
<div style="position:absolute;left:825px;top:411px;width:11px;height:11px;background:#fff;border:1px solid #8a8a8a"></div>
<div style="position:absolute;left:827px;top:416px;width:7px;height:1px;background:#707070"></div>
<div style="position:absolute;left:795px;top:48px;width:426px;height:155px;background:#fff;border-left:1px solid #a0a0a0;border-right:1px solid #a0a0a0;border-bottom:1px solid #a0a0a0"></div>
<div style="position:absolute;left:1221px;top:48px;width:5px;height:157px;background:linear-gradient(90deg,rgba(0,0,0,0.10),rgba(0,0,0,0))"></div>
<div style="position:absolute;left:796px;top:203px;width:430px;height:4px;background:linear-gradient(180deg,rgba(0,0,0,0.09),rgba(0,0,0,0))"></div>
<svg style="position:absolute;left:803px;top:52px" width="9" height="14" viewBox="0 0 9 14"><rect x="0.5" y="0.5" width="8" height="13" rx="1.5" fill="#fff" stroke="#333"/><rect x="2" y="2" width="5" height="1.6" fill="#333"/><g fill="#444"><rect x="2" y="5" width="1" height="1"/><rect x="4" y="5" width="1" height="1"/><rect x="6" y="5" width="1" height="1"/><rect x="2" y="7" width="1" height="1"/><rect x="4" y="7" width="1" height="1"/><rect x="6" y="7" width="1" height="1"/><rect x="2" y="9" width="1" height="1"/><rect x="4" y="9" width="1" height="1"/><rect x="2" y="11" width="1" height="1"/><rect x="4" y="11" width="1" height="1"/><rect x="6" y="9" width="1" height="3"/></g></svg>
<div class="ui" style="position:absolute;left:820px;top:52px;letter-spacing:-0.2px;color:#1e1e1e">&#x27;Internet Sales&#x27;[Internet Previous Quarter Sales 2]</div>
<svg style="position:absolute;left:803px;top:74px" width="9" height="14" viewBox="0 0 9 14"><rect x="0.5" y="0.5" width="8" height="13" rx="1.5" fill="#fff" stroke="#333"/><rect x="2" y="2" width="5" height="1.6" fill="#333"/><g fill="#444"><rect x="2" y="5" width="1" height="1"/><rect x="4" y="5" width="1" height="1"/><rect x="6" y="5" width="1" height="1"/><rect x="2" y="7" width="1" height="1"/><rect x="4" y="7" width="1" height="1"/><rect x="6" y="7" width="1" height="1"/><rect x="2" y="9" width="1" height="1"/><rect x="4" y="9" width="1" height="1"/><rect x="2" y="11" width="1" height="1"/><rect x="4" y="11" width="1" height="1"/><rect x="6" y="9" width="1" height="3"/></g></svg>
<div class="ui" style="position:absolute;left:820px;top:74px;letter-spacing:-0.13px;color:#1e1e1e">&#x27;Internet Sales&#x27;[Internet Previous Quarter Sales Proportion to QTD]</div>
<svg style="position:absolute;left:803px;top:96px" width="9" height="14" viewBox="0 0 9 14"><rect x="0.5" y="0.5" width="8" height="13" rx="1.5" fill="#fff" stroke="#333"/><rect x="2" y="2" width="5" height="1.6" fill="#333"/><g fill="#444"><rect x="2" y="5" width="1" height="1"/><rect x="4" y="5" width="1" height="1"/><rect x="6" y="5" width="1" height="1"/><rect x="2" y="7" width="1" height="1"/><rect x="4" y="7" width="1" height="1"/><rect x="6" y="7" width="1" height="1"/><rect x="2" y="9" width="1" height="1"/><rect x="4" y="9" width="1" height="1"/><rect x="2" y="11" width="1" height="1"/><rect x="4" y="11" width="1" height="1"/><rect x="6" y="9" width="1" height="3"/></g></svg>
<div class="ui" style="position:absolute;left:820px;top:96px;letter-spacing:0.047px;color:#1e1e1e">&#x27;Internet Sales&#x27;[Internet Total Discount Amount]</div>
<svg style="position:absolute;left:803px;top:118px" width="9" height="14" viewBox="0 0 9 14"><rect x="0.5" y="0.5" width="8" height="13" rx="1.5" fill="#fff" stroke="#333"/><rect x="2" y="2" width="5" height="1.6" fill="#333"/><g fill="#444"><rect x="2" y="5" width="1" height="1"/><rect x="4" y="5" width="1" height="1"/><rect x="6" y="5" width="1" height="1"/><rect x="2" y="7" width="1" height="1"/><rect x="4" y="7" width="1" height="1"/><rect x="6" y="7" width="1" height="1"/><rect x="2" y="9" width="1" height="1"/><rect x="4" y="9" width="1" height="1"/><rect x="2" y="11" width="1" height="1"/><rect x="4" y="11" width="1" height="1"/><rect x="6" y="9" width="1" height="3"/></g></svg>
<div class="ui" style="position:absolute;left:820px;top:118px;letter-spacing:-0.05px;color:#1e1e1e">&#x27;Internet Sales&#x27;[Internet Total Freight]</div>
<svg style="position:absolute;left:803px;top:140px" width="9" height="14" viewBox="0 0 9 14"><rect x="0.5" y="0.5" width="8" height="13" rx="1.5" fill="#fff" stroke="#333"/><rect x="2" y="2" width="5" height="1.6" fill="#333"/><g fill="#444"><rect x="2" y="5" width="1" height="1"/><rect x="4" y="5" width="1" height="1"/><rect x="6" y="5" width="1" height="1"/><rect x="2" y="7" width="1" height="1"/><rect x="4" y="7" width="1" height="1"/><rect x="6" y="7" width="1" height="1"/><rect x="2" y="9" width="1" height="1"/><rect x="4" y="9" width="1" height="1"/><rect x="2" y="11" width="1" height="1"/><rect x="4" y="11" width="1" height="1"/><rect x="6" y="9" width="1" height="3"/></g></svg>
<div class="ui" style="position:absolute;left:820px;top:140px;letter-spacing:-0.073px;color:#1e1e1e">&#x27;Internet Sales&#x27;[Internet Total Gross Profit]</div>
<svg style="position:absolute;left:803px;top:162px" width="9" height="14" viewBox="0 0 9 14"><rect x="0.5" y="0.5" width="8" height="13" rx="1.5" fill="#fff" stroke="#333"/><rect x="2" y="2" width="5" height="1.6" fill="#333"/><g fill="#444"><rect x="2" y="5" width="1" height="1"/><rect x="4" y="5" width="1" height="1"/><rect x="6" y="5" width="1" height="1"/><rect x="2" y="7" width="1" height="1"/><rect x="4" y="7" width="1" height="1"/><rect x="6" y="7" width="1" height="1"/><rect x="2" y="9" width="1" height="1"/><rect x="4" y="9" width="1" height="1"/><rect x="2" y="11" width="1" height="1"/><rect x="4" y="11" width="1" height="1"/><rect x="6" y="9" width="1" height="3"/></g></svg>
<div class="ui" style="position:absolute;left:820px;top:162px;letter-spacing:-0.035px;color:#1e1e1e">&#x27;Internet Sales&#x27;[Internet Total Product Cost]</div>
<div style="position:absolute;left:796px;top:180px;width:407px;height:22px;background:#cfdcf4"></div>
<svg style="position:absolute;left:803px;top:184px" width="9" height="14" viewBox="0 0 9 14"><rect x="0.5" y="0.5" width="8" height="13" rx="1.5" fill="#fff" stroke="#333"/><rect x="2" y="2" width="5" height="1.6" fill="#333"/><g fill="#444"><rect x="2" y="5" width="1" height="1"/><rect x="4" y="5" width="1" height="1"/><rect x="6" y="5" width="1" height="1"/><rect x="2" y="7" width="1" height="1"/><rect x="4" y="7" width="1" height="1"/><rect x="6" y="7" width="1" height="1"/><rect x="2" y="9" width="1" height="1"/><rect x="4" y="9" width="1" height="1"/><rect x="2" y="11" width="1" height="1"/><rect x="4" y="11" width="1" height="1"/><rect x="6" y="9" width="1" height="3"/></g></svg>
<div class="ui" style="position:absolute;left:820px;top:184px;letter-spacing:-0.13px;color:#1e1e1e">&#x27;Internet Sales&#x27;[Internet Total Sales]</div>
<div style="position:absolute;left:1203px;top:48px;width:17px;height:154px;background:#f0f0f0"></div>
<div style="position:absolute;left:1204px;top:49px;width:15px;height:16px;background:#fff;border:1px solid #a0a0a0"></div>
<svg style="position:absolute;left:1208px;top:54px" width="8" height="5" viewBox="0 0 8 5"><path d="M3.5 0.5L7 4h-7z" fill="#606060"/></svg>
<div style="position:absolute;left:1204px;top:128px;width:15px;height:44px;background:#fff;border:1px solid #a0a0a0"></div>
<div style="position:absolute;left:1204px;top:185px;width:15px;height:16px;background:#fff;border:1px solid #a0a0a0"></div>
<svg style="position:absolute;left:1208px;top:191px" width="8" height="5" viewBox="0 0 8 5"><path d="M0 0.5h7L3.5 4z" fill="#606060"/></svg>
</body></html>
